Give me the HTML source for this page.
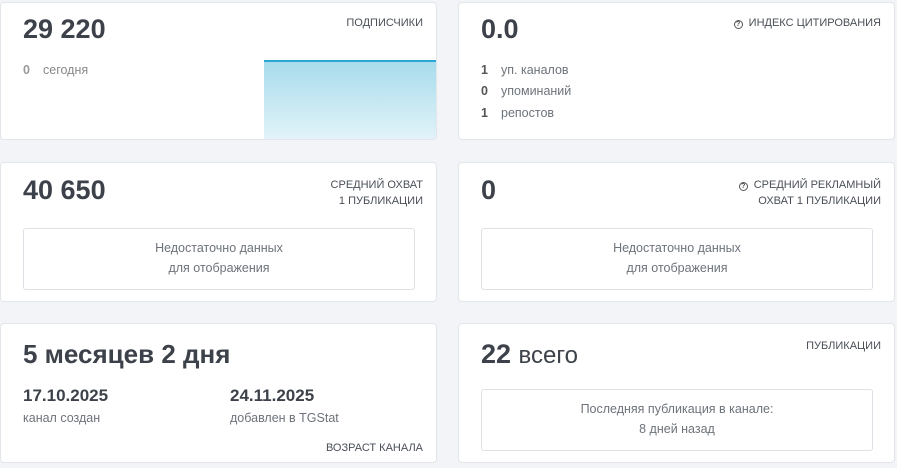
<!DOCTYPE html>
<html><head><meta charset="utf-8"><style>
*{box-sizing:border-box;margin:0;padding:0}
body{width:897px;height:468px;background:#f3f4f7;font-family:"Liberation Sans","DejaVu Sans",sans-serif;color:#4a4f57;position:relative;overflow:hidden}
.card{position:absolute;background:#fff;border:1px solid #e2e5ea;border-radius:4px;overflow:hidden}
.big{position:absolute;left:22px;font-size:27px;font-weight:bold;color:#3d424a}
.lbl{position:absolute;right:13px;font-size:11px;color:#4a4f57;text-align:right;line-height:16px}
.row{position:absolute;left:22px;font-size:12.5px;color:#6d737b}
.row b{color:#555;display:inline-block;width:20px}
.box{position:absolute;left:22px;border:1px solid #dde0e5;border-radius:3px;text-align:center;font-size:12.5px;color:#6d737b;line-height:20px;padding-top:9px}
.q{display:inline-block;width:9px;height:9px;border:1.3px solid #555;border-radius:50%;font-size:7px;line-height:7px;text-align:center;vertical-align:0px;margin-right:6px;font-weight:bold}
</style></head><body>
<div class="card" style="left:0;top:2px;width:437px;height:138px">
 <div class="big" style="top:11px">29 220</div>
 <div class="lbl" style="top:12px">ПОДПИСЧИКИ</div>
 <div class="row" style="top:60px;color:#888"><b style="color:#999">0</b>сегодня</div>
 <div style="position:absolute;left:263px;top:57px;width:173px;height:81px;border-top:2px solid #29a6d1;background:linear-gradient(#a8dcec,#e3f3f9)"></div>
</div>
<div class="card" style="left:458px;top:2px;width:437px;height:138px">
 <div class="big" style="top:11px">0.0</div>
 <div class="lbl" style="top:12px"><span class="q">?</span>ИНДЕКС ЦИТИРОВАНИЯ</div>
 <div class="row" style="top:60px"><b>1</b>уп. каналов</div>
 <div class="row" style="top:81px"><b>0</b>упоминаний</div>
 <div class="row" style="top:103px"><b>1</b>репостов</div>
</div>
<div class="card" style="left:0;top:162px;width:437px;height:140px">
 <div class="big" style="top:12px">40 650</div>
 <div class="lbl" style="top:14px">СРЕДНИЙ ОХВАТ<br>1 ПУБЛИКАЦИИ</div>
 <div class="box" style="top:65px;width:392px;height:62px">Недостаточно данных<br>для отображения</div>
</div>
<div class="card" style="left:458px;top:162px;width:437px;height:140px">
 <div class="big" style="top:12px">0</div>
 <div class="lbl" style="top:14px"><span class="q">?</span>СРЕДНИЙ РЕКЛАМНЫЙ<br>ОХВАТ 1 ПУБЛИКАЦИИ</div>
 <div class="box" style="top:65px;width:392px;height:62px">Недостаточно данных<br>для отображения</div>
</div>
<div class="card" style="left:0;top:323px;width:437px;height:140px">
 <div class="big" style="top:15px;font-size:26px">5 месяцев 2 дня</div>
 <div style="position:absolute;left:22px;top:62px;font-size:17px;font-weight:bold;color:#3d424a">17.10.2025</div>
 <div class="row" style="top:87px">канал создан</div>
 <div style="position:absolute;left:229px;top:62px;font-size:17px;font-weight:bold;color:#3d424a">24.11.2025</div>
 <div class="row" style="top:87px;left:229px">добавлен в TGStat</div>
 <div class="lbl" style="top:116px">ВОЗРАСТ КАНАЛА</div>
</div>
<div class="card" style="left:458px;top:323px;width:437px;height:140px">
 <div class="big" style="top:15px">22 <span style="font-weight:normal;font-size:24px">всего</span></div>
 <div class="lbl" style="top:14px">ПУБЛИКАЦИИ</div>
 <div class="box" style="top:65px;width:392px;height:62px">Последняя публикация в канале:<br>8 дней назад</div>
</div>
</body></html>
